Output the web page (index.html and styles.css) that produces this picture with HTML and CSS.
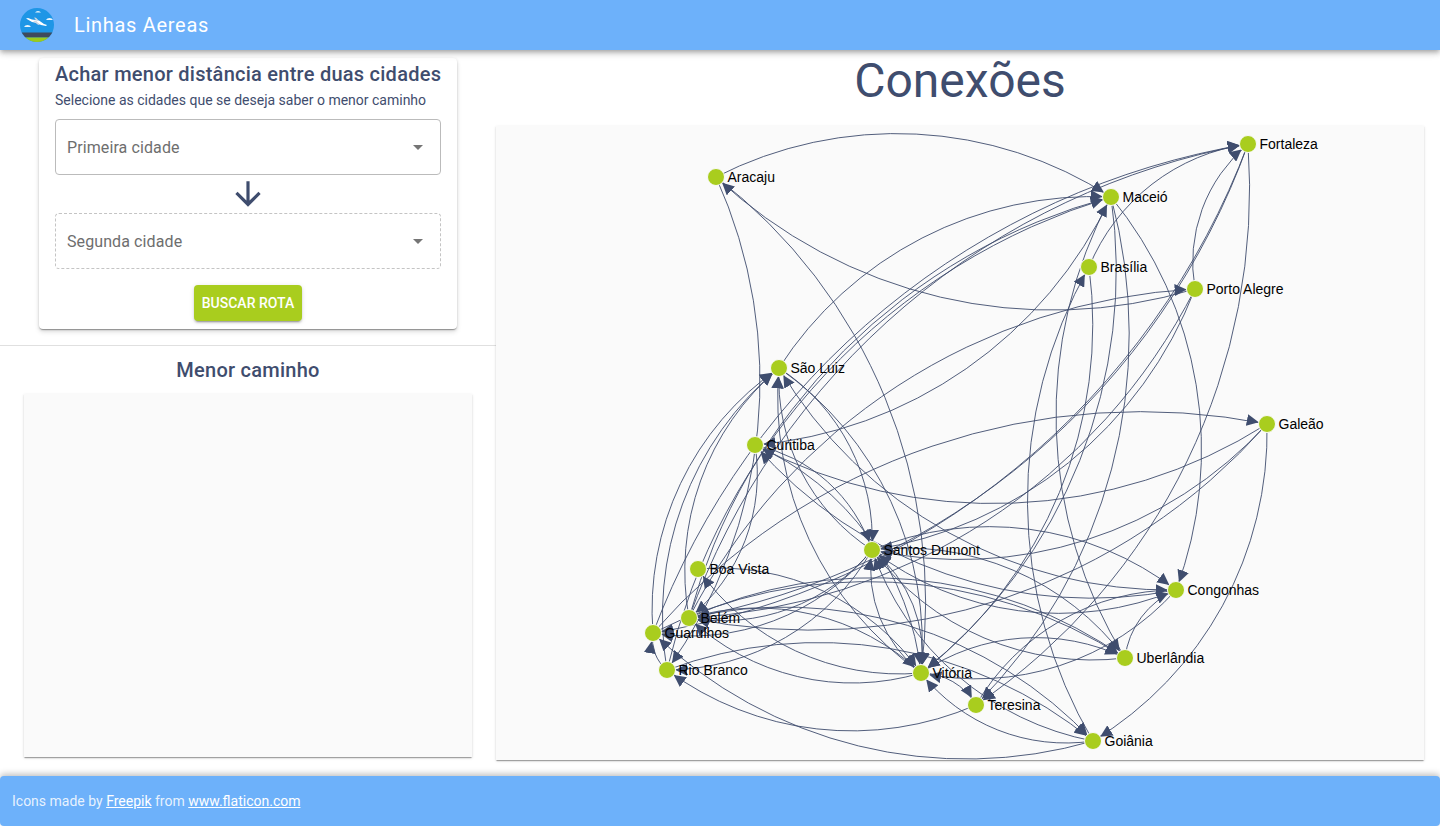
FILE: index.html
```html
<!DOCTYPE html>
<html lang="pt">
    <head>
        <meta charset="utf-8">
        <title>Linhas Aereas</title>
        <link rel="stylesheet" href="styles.css">
    </head>
    <body>
        <header class="topbar">
            <svg class="logo" viewBox="0 0 34 34">
                <clipPath id="logo-clip"><circle cx="17" cy="17" r="17"/></clipPath>
                <g clip-path="url(#logo-clip)">
                    <rect width="34" height="34" fill="#1e96e6"/>
                    <rect y="24.5" width="34" height="5" fill="#3f4a5c"/>
                    <rect y="29.5" width="34" height="5" fill="#9ccb1b"/>
                    <path d="M15 4.500h6q-1-1.500-3-1.500t-3 1.500zM4 19h7q-1-2-3.500-2T4 19zM26 12h7q-1-2-3.500-2T26 12z" fill="#e8f4fc"/>
                    <path d="M6 10.500l2-.5 4 1.500 7 1 5 3.500 3 1-1 1-5-1-4-2-5-1z" fill="#fff"/>
                    <path d="M13 13l3-.5 4 4.500-2-.2zM14 9.500l2 .2 3 3-3-.5z" fill="#cfd8e3"/>
                </g>
            </svg>
            <span class="topbar-title">Linhas Aereas</span>
        </header>

        <main class="content">
            <aside class="sidebar">
                <form class="search-card">
                    <h2 class="search-title">Achar menor distância entre duas cidades</h2>
                    <p class="search-hint">Selecione as cidades que se deseja saber o menor caminho</p>
                    <div class="select">
                        <span>Primeira cidade</span>
                        <i class="select-caret"></i>
                    </div>
                    <div class="arrow-down">
                        <svg viewBox="0 0 24 24" width="38" height="38"><path d="M20 12l-1.410-1.410L13 16.170V4h-2v12.170l-5.580-5.590L4 12l8 8 8-8z"/></svg>
                    </div>
                    <div class="select select-disabled">
                        <span>Segunda cidade</span>
                        <i class="select-caret"></i>
                    </div>
                    <div class="search-actions">
                        <button type="button" class="search-button">Buscar rota</button>
                    </div>
                </form>
                <hr class="divider">
                <h2 class="path-title">Menor caminho</h2>
                <div class="path-box"></div>
            </aside>

            <section class="graph-area">
                <h1 class="graph-title">Conexões</h1>
                <div class="graph-box">
                    <svg id="graph" class="graph" viewBox="496 126 928 634"></svg>
                </div>
            </section>
        </main>

        <footer class="bottombar">
            <span>Icons made by <a href="#">Freepik</a> from <a href="#">www.flaticon.com</a></span>
        </footer>

        <script src="graph.js"></script>
    </body>
</html>
```

FILE: styles.css
```css
* {
    box-sizing: border-box;
}
body {
    margin: 0;
    height: 100vh;
    overflow: hidden;
    display: flex;
    flex-direction: column;
    font-family: Roboto, sans-serif;
    color: #3f4d6e;
    background: #fff;
}

.topbar {
    height: 50px;
    flex: none;
    display: flex;
    align-items: center;
    padding-left: 20px;
    background: #6db1fa;
    box-shadow: 0 2px 4px -1px rgb(0 0 0 / 20%), 0 4px 5px 0 rgb(0 0 0 / 14%), 0 1px 10px 0 rgb(0 0 0 / 12%);
    position: relative;
}
.logo {
    width: 34px;
    height: 34px;
}
.topbar-title {
    margin-left: 20px;
    font-size: 20px;
    letter-spacing: .7px;
    color: #fff;
}

.content {
    flex: 1;
    display: flex;
    min-height: 0;
}
.sidebar {
    width: 496px;
    flex: none;
    padding-top: 8px;
}
.search-card {
    width: 418px;
    margin: 0 auto;
    padding: 0 16px 8px;
    background: #fff;
    border-radius: 4px;
    box-shadow: 0 2px 1px -1px rgb(0 0 0 / 20%), 0 1px 1px 0 rgb(0 0 0 / 14%), 0 1px 3px 0 rgb(0 0 0 / 12%), 0 3px 5px rgb(0 0 0 / 12%);
}
.search-title,
.path-title {
    margin: 0;
    font-size: 20px;
    font-weight: 500;
    line-height: 32px;
    letter-spacing: .25px;
    white-space: nowrap;
}
.search-hint {
    margin: 0 0 9px;
    font-size: 14px;
    line-height: 20px;
}
.select {
    height: 56px;
    display: flex;
    align-items: center;
    justify-content: space-between;
    padding: 0 17px 0 11px;
    border: 1px solid #bbb;
    border-radius: 4px;
    font-size: 16px;
    letter-spacing: .1px;
    color: #6e6e6e;
}
.select-disabled {
    border: 1px dashed #c4c4c4;
}
.select-caret {
    width: 0;
    height: 0;
    border-left: 5px solid transparent;
    border-right: 5px solid transparent;
    border-top: 5px solid #757575;
}
.arrow-down {
    height: 38px;
    display: flex;
    align-items: center;
    justify-content: center;
}
.arrow-down svg {
    fill: #3f4d6e;
}
.search-actions {
    display: flex;
    justify-content: center;
    margin-top: 16px;
}
.search-button {
    height: 36px;
    padding: 0 8px;
    border: 0;
    border-radius: 4px;
    background: #a9cd1e;
    color: #fff;
    font-family: Roboto, sans-serif;
    font-size: 14px;
    font-weight: 500;
    text-transform: uppercase;
    box-shadow: 0 3px 1px -2px rgb(0 0 0 / 20%), 0 2px 2px 0 rgb(0 0 0 / 14%), 0 1px 5px 0 rgb(0 0 0 / 12%);
}
.divider {
    height: 1px;
    margin: 16px 0 8px;
    border: 0;
    background: #e0e0e0;
}
.path-title {
    text-align: center;
    margin-bottom: 8px;
}
.path-box {
    height: 363px;
    margin: 0 24px;
    background: #fafafa;
    box-shadow: 0 2px 1px -1px rgb(0 0 0 / 20%), 0 1px 1px 0 rgb(0 0 0 / 14%), 0 1px 3px 0 rgb(0 0 0 / 12%);
}

.graph-area {
    flex: 1;
    padding-right: 16px;
}
.graph-title {
    height: 76px;
    margin: 0;
    display: flex;
    align-items: center;
    justify-content: center;
    padding-bottom: 16px;
    font-size: 48px;
    font-weight: 400;
}
.graph-box {
    height: 634px;
    background: #fafafa;
    box-shadow: 0 2px 1px -1px rgb(0 0 0 / 20%), 0 1px 1px 0 rgb(0 0 0 / 14%), 0 1px 3px 0 rgb(0 0 0 / 12%);
}
.graph {
    display: block;
    width: 100%;
    height: 100%;
}
.edge {
    fill: none;
    stroke: #3f4d6e;
    stroke-width: 1;
    stroke-opacity: .9;
}
.arrowhead {
    fill: #3f4d6e;
}
.node {
    fill: #a9cd1e;
    stroke: #fafafa;
    stroke-width: 1;
}
.node-label {
    font-family: "Liberation Sans", Arial, sans-serif;
    font-size: 14px;
    fill: #000;
}

.bottombar {
    height: 50px;
    flex: none;
    display: flex;
    align-items: center;
    padding-left: 12px;
    background: #6db1fa;
    border-radius: 4px;
    font-size: 14px;
    color: rgb(255 255 255 / 85%);
    box-shadow: 0 -2px 6px rgb(0 0 0 / 25%);
    position: relative;
}
.bottombar a {
    color: #fff;
}
```

FILE: graph.js
```js
const cities = {
    aracaju: ['Aracaju', 716, 177],
    maceio: ['Maceió', 1111, 197],
    fortaleza: ['Fortaleza', 1248, 144],
    brasilia: ['Brasília', 1089, 267],
    portoAlegre: ['Porto Alegre', 1195, 289],
    saoLuiz: ['São Luiz', 779, 368],
    curitiba: ['Curitiba', 755, 445],
    galeao: ['Galeão', 1267, 424],
    santosDumont: ['Santos Dumont', 872, 550],
    boaVista: ['Boa Vista', 698, 569],
    congonhas: ['Congonhas', 1176, 590],
    belem: ['Belém', 689, 618],
    guarulhos: ['Guarulhos', 653, 633],
    uberlandia: ['Uberlândia', 1125, 658],
    rioBranco: ['Rio Branco', 667, 670],
    vitoria: ['Vitória', 921, 673],
    teresina: ['Teresina', 976, 705],
    goiania: ['Goiânia', 1093, 741]
};

// source > list of targets
const routes = {
    aracaju: ['maceio', 'rioBranco', 'vitoria'],
    maceio: ['curitiba', 'congonhas', 'vitoria', 'teresina'],
    fortaleza: ['belem', 'guarulhos', 'teresina'],
    brasilia: ['fortaleza', 'vitoria'],
    portoAlegre: ['aracaju', 'fortaleza', 'santosDumont', 'belem'],
    saoLuiz: ['maceio', 'santosDumont', 'vitoria'],
    curitiba: ['santosDumont', 'vitoria', 'belem'],
    galeao: ['curitiba', 'goiania', 'santosDumont', 'belem'],
    santosDumont: ['vitoria', 'congonhas', 'uberlandia', 'belem', 'guarulhos', 'rioBranco', 'saoLuiz'],
    boaVista: ['vitoria'],
    congonhas: ['vitoria', 'santosDumont', 'curitiba', 'saoLuiz'],
    belem: ['maceio', 'fortaleza', 'portoAlegre', 'vitoria', 'uberlandia', 'saoLuiz', 'goiania'],
    guarulhos: ['fortaleza', 'saoLuiz', 'galeao', 'uberlandia'],
    uberlandia: ['maceio', 'congonhas', 'santosDumont'],
    rioBranco: ['maceio', 'saoLuiz', 'guarulhos', 'goiania'],
    vitoria: ['boaVista', 'belem', 'teresina', 'uberlandia', 'santosDumont', 'saoLuiz'],
    teresina: ['rioBranco', 'congonhas'],
    goiania: ['brasilia', 'vitoria', 'guarulhos', 'santosDumont']
};

const svgNS = 'http://www.w3.org/2000/svg';
const graph = document.getElementById('graph');

function add(parent, name, attrs, text) {
    const el = document.createElementNS(svgNS, name);
    for (const key in attrs) {
        el.setAttribute(key, attrs[key]);
    }
    if (text) {
        el.textContent = text;
    }
    parent.appendChild(el);
    return el;
}

const defs = add(graph, 'defs', {});
const marker = add(defs, 'marker', {
    id: 'arrow', viewBox: '0 -5 10 10', refX: 17, refY: 0,
    markerWidth: 12, markerHeight: 12, markerUnits: 'userSpaceOnUse', orient: 'auto'
});
add(marker, 'path', {d: 'M0,-5L10,0L0,5z', class: 'arrowhead'});

for (const from in routes) {
    routes[from].forEach(to => {
        const [, x1, y1] = cities[from];
        const [, x2, y2] = cities[to];
        const r = Math.hypot(x2 - x1, y2 - y1);
        add(graph, 'path', {
            d: `M${x1},${y1}A${r},${r} 0 0,1 ${x2},${y2}`,
            class: 'edge',
            'marker-end': 'url(#arrow)'
        });
    });
}
for (const key in cities) {
    const [, x, y] = cities[key];
    add(graph, 'circle', {cx: x, cy: y, r: 8.5, class: 'node'});
}
for (const key in cities) {
    const [name, x, y] = cities[key];
    add(graph, 'text', {x: x + 11.5, y: y + 5, class: 'node-label'}, name);
}
```
